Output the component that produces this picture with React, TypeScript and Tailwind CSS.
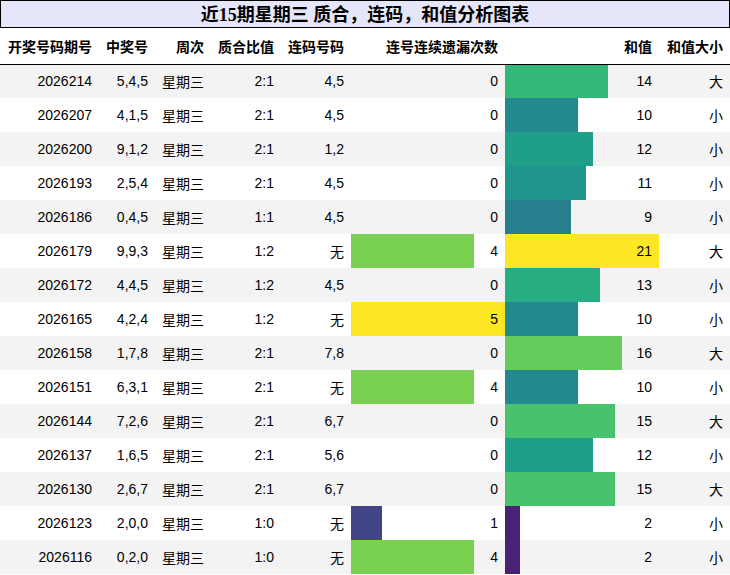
import React from 'react';

interface Row {
  issue: string;
  nums: string;
  week: string;
  ratio: string;
  pair: string;
  miss: number;
  sum: number;
  size: string;
}

const rows: Row[] = [
  { issue: '2026214', nums: '5,4,5', week: '星期三', ratio: '2:1', pair: '4,5', miss: 0, sum: 14, size: '大' },
  { issue: '2026207', nums: '4,1,5', week: '星期三', ratio: '2:1', pair: '4,5', miss: 0, sum: 10, size: '小' },
  { issue: '2026200', nums: '9,1,2', week: '星期三', ratio: '2:1', pair: '1,2', miss: 0, sum: 12, size: '小' },
  { issue: '2026193', nums: '2,5,4', week: '星期三', ratio: '2:1', pair: '4,5', miss: 0, sum: 11, size: '小' },
  { issue: '2026186', nums: '0,4,5', week: '星期三', ratio: '1:1', pair: '4,5', miss: 0, sum: 9, size: '小' },
  { issue: '2026179', nums: '9,9,3', week: '星期三', ratio: '1:2', pair: '无', miss: 4, sum: 21, size: '大' },
  { issue: '2026172', nums: '4,4,5', week: '星期三', ratio: '1:2', pair: '4,5', miss: 0, sum: 13, size: '小' },
  { issue: '2026165', nums: '4,2,4', week: '星期三', ratio: '1:2', pair: '无', miss: 5, sum: 10, size: '小' },
  { issue: '2026158', nums: '1,7,8', week: '星期三', ratio: '2:1', pair: '7,8', miss: 0, sum: 16, size: '大' },
  { issue: '2026151', nums: '6,3,1', week: '星期三', ratio: '2:1', pair: '无', miss: 4, sum: 10, size: '小' },
  { issue: '2026144', nums: '7,2,6', week: '星期三', ratio: '2:1', pair: '6,7', miss: 0, sum: 15, size: '大' },
  { issue: '2026137', nums: '1,6,5', week: '星期三', ratio: '2:1', pair: '5,6', miss: 0, sum: 12, size: '小' },
  { issue: '2026130', nums: '2,6,7', week: '星期三', ratio: '2:1', pair: '6,7', miss: 0, sum: 15, size: '大' },
  { issue: '2026123', nums: '2,0,0', week: '星期三', ratio: '1:0', pair: '无', miss: 1, sum: 2, size: '小' },
  { issue: '2026116', nums: '0,2,0', week: '星期三', ratio: '1:0', pair: '无', miss: 4, sum: 2, size: '小' },
];

// viridis colours for the values that show up
const missColor: Record<number, string> = { 1: '#414487', 4: '#7ad151', 5: '#fde725' };
const sumColor: Record<number, string> = {
  2: '#482374',
  9: '#277f8e',
  10: '#23898e',
  11: '#1f968b',
  12: '#1f9e89',
  13: '#27ad81',
  14: '#35b779',
  15: '#4ac16d',
  16: '#66cb5d',
  21: '#fde725',
};

const bar = (pct: number, color: string) =>
  pct > 0
    ? { background: `linear-gradient(90deg, ${color} ${pct}%, transparent ${pct}%)` }
    : undefined;

const headers = ['开奖号码期号', '中奖号', '周次', '质合比值', '连码号码', '连号连续遗漏次数', '和值', '和值大小'];
const widths = ['w-[99px]', 'w-[56px]', 'w-[56px]', 'w-[70px]', 'w-[70px]', 'w-[154px]', 'w-[154px]', 'w-[71px]'];

// CJK glyphs sit a little lower than the digits in the original
const Cjk = ({ children }: { children: React.ReactNode }) => (
  <span className="align-[-2px]">{children}</span>
);

export default function App() {
  const maxMiss = Math.max(...rows.map((r) => r.miss));
  const maxSum = Math.max(...rows.map((r) => r.sum));

  return (
    <div className="w-[730px] bg-white text-black font-['Liberation_Sans','Noto_Sans_CJK_SC',sans-serif]">
      {/* Title */}
      <div className="h-[28px] border border-black bg-[#e6e6fa] flex items-center justify-center pt-[1px]">
        <span className="text-[18px] font-bold leading-none font-['Liberation_Serif','Noto_Sans_CJK_SC',serif]">
          近15期星期三 质合，连码，和值分析图表
        </span>
      </div>

      <table className="w-[730px] table-fixed border-collapse text-[14px]">
        <colgroup>
          {widths.map((w, i) => (
            <col key={i} className={w} />
          ))}
        </colgroup>
        <thead>
          <tr className="h-[36px] border-b border-black">
            {headers.map((h) => (
              <th key={h} className="p-0 pt-[4px] pr-[7px] text-right font-bold whitespace-nowrap">
                {h}
              </th>
            ))}
          </tr>
        </thead>
        <tbody>
          {rows.map((r, i) => (
            <tr key={r.issue} className={`h-[34px] ${i % 2 === 0 ? 'bg-[#f3f3f3]' : 'bg-white'}`}>
              <td className="p-0 pr-[7px] text-right">{r.issue}</td>
              <td className="p-0 pr-[7px] text-right">{r.nums}</td>
              <td className="p-0 pr-[7px] text-right">
                <Cjk>{r.week}</Cjk>
              </td>
              <td className="p-0 pr-[7px] text-right">{r.ratio}</td>
              <td className="p-0 pr-[7px] text-right">
                {r.pair === '无' ? <Cjk>{r.pair}</Cjk> : r.pair}
              </td>
              <td
                className="p-0 pr-[7px] text-right"
                style={bar((r.miss / maxMiss) * 100, missColor[r.miss])}
              >
                {r.miss}
              </td>
              <td
                className="p-0 pr-[7px] text-right"
                style={bar((r.sum / maxSum) * 100, sumColor[r.sum])}
              >
                {r.sum}
              </td>
              <td className="p-0 pr-[7px] text-right">
                <Cjk>{r.size}</Cjk>
              </td>
            </tr>
          ))}
        </tbody>
      </table>
    </div>
  );
}
